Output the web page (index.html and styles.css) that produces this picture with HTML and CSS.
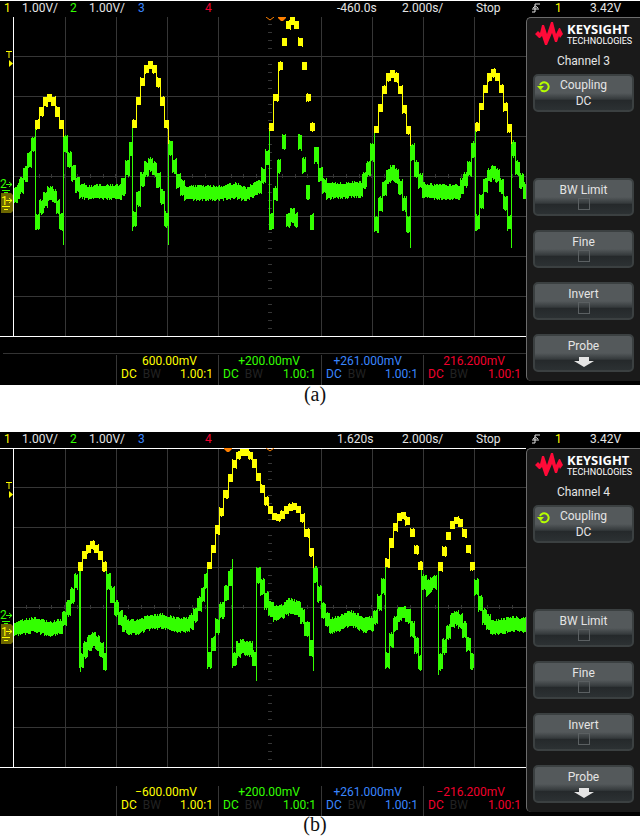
FILE: index.html
```html
<!DOCTYPE html>
<html lang="en">
<head>
<meta charset="utf-8">
<meta name="viewport" content="width=device-width, initial-scale=1">
<title>Oscilloscope captures</title>
<link rel="stylesheet" href="styles.css">
</head>
<body>
<svg class="defs" aria-hidden="true">
  <symbol id="logo" viewBox="0 0 28 24"><path d="M0 12L3 9L5 11L7 3H9L12 12L16 0H18L21 12L24 6H25L28 12L25 16L24 14L22 20H20L17 11L12 23H10L7 14L5 16H4Z"/></symbol>
  <symbol id="edge" viewBox="0 0 8 10"><path d="M0 9H3V1H8M0 6H7M1 5L3.500 3L6 5"/></symbol>
  <symbol id="cycle" viewBox="0 0 14 12"><path class="ring" d="M4 9A4.500 4.500 0 1 0 3 4"/><path class="tip" d="M0 5H7L3.500 9Z"/></symbol>
  <symbol id="down" viewBox="0 0 20 10"><path d="M5 0H15V4H20L10 10L0 4H5Z"/></symbol>
  <symbol id="markers" viewBox="0 0 14 163">
    <path class="yellow-line" d="M6 .5H12M9 1V7"/>
    <path class="yellow-fill" d="M9 9L13 12.500L9 16Z"/>
    <path class="zero" d="M1 142H11L13 144V160L11 162H1Z"/>
    <path class="green-line" d="M6 133.500H12M9 131L12 133.500L9 136M2 139.500H10M4 141.500H8"/>
    <path class="yellow-line" d="M6 149.500H12M9 147L12 149.500L9 152M2 155.500H10M4 158.500H8"/>
  </symbol>
</svg>

<main>
<figure class="capture">
  <div class="scope">
    <header class="status">
      <span class="yellow">1</span><span>1.00V/</span><span class="green">2</span><span>1.00V/</span>
      <span class="blue">3</span><span class="red">4</span><span>-460.0s</span><span>2.000s/</span><span>Stop</span>
      <svg class="edge"><use href="#edge"/></svg><span class="yellow">1</span><span>3.42V</span>
    </header>
    <div class="screen">
      <svg class="plot" data-plot="a" viewBox="0 17 526 320" role="img" aria-label="Channels 1 and 2"></svg>
      <div class="readouts ruled">
        <div class="cell yellow"><b>600.00mV</b><p><span>DC</span><i>BW</i><span>1.00:1</span></p></div>
        <div class="cell green"><b>+200.00mV</b><p><span>DC</span><i>BW</i><span>1.00:1</span></p></div>
        <div class="cell blue"><b>+261.000mV</b><p><span>DC</span><i>BW</i><span>1.00:1</span></p></div>
        <div class="cell red"><b>216.200mV</b><p><span>DC</span><i>BW</i><span>1.00:1</span></p></div>
      </div>
    </div>
    <aside class="menu">
      <div class="brand"><svg><use href="#logo"/></svg><div><strong>KEYSIGHT</strong><small>TECHNOLOGIES</small></div></div>
      <h2>Channel 3</h2>
      <button class="key first" type="button"><svg class="cycle"><use href="#cycle"/></svg><span>Coupling</span><span>DC</span></button>
      <label class="key" for="bw-a"><span>BW Limit</span><input id="bw-a" type="checkbox"></label>
      <label class="key" for="fine-a"><span>Fine</span><input id="fine-a" type="checkbox"></label>
      <label class="key" for="invert-a"><span>Invert</span><input id="invert-a" type="checkbox"></label>
      <button class="key" type="button"><span>Probe</span><svg class="down"><use href="#down"/></svg></button>
    </aside>
  </div>
  <figcaption>(a)</figcaption>
</figure>

<figure class="capture">
  <div class="scope">
    <header class="status">
      <span class="yellow">1</span><span>1.00V/</span><span class="green">2</span><span>1.00V/</span>
      <span class="blue">3</span><span class="red">4</span><span>1.620s</span><span>2.000s/</span><span>Stop</span>
      <svg class="edge"><use href="#edge"/></svg><span class="yellow">1</span><span>3.42V</span>
    </header>
    <div class="screen">
      <svg class="plot" data-plot="b" viewBox="0 448 526 320" role="img" aria-label="Channels 1 and 2"></svg>
      <div class="readouts">
        <div class="cell yellow"><b>−600.00mV</b><p><span>DC</span><i>BW</i><span>1.00:1</span></p></div>
        <div class="cell green"><b>+200.00mV</b><p><span>DC</span><i>BW</i><span>1.00:1</span></p></div>
        <div class="cell blue"><b>+261.000mV</b><p><span>DC</span><i>BW</i><span>1.00:1</span></p></div>
        <div class="cell red"><b>−216.200mV</b><p><span>DC</span><i>BW</i><span>1.00:1</span></p></div>
      </div>
    </div>
    <aside class="menu">
      <div class="brand"><svg><use href="#logo"/></svg><div><strong>KEYSIGHT</strong><small>TECHNOLOGIES</small></div></div>
      <h2>Channel 4</h2>
      <button class="key first" type="button"><svg class="cycle"><use href="#cycle"/></svg><span>Coupling</span><span>DC</span></button>
      <label class="key" for="bw-b"><span>BW Limit</span><input id="bw-b" type="checkbox"></label>
      <label class="key" for="fine-b"><span>Fine</span><input id="fine-b" type="checkbox"></label>
      <label class="key" for="invert-b"><span>Invert</span><input id="invert-b" type="checkbox"></label>
      <button class="key" type="button"><span>Probe</span><svg class="down"><use href="#down"/></svg></button>
    </aside>
  </div>
  <figcaption>(b)</figcaption>
</figure>
</main>
<script src="plots.js"></script>
</body>
</html>
```
FILE: styles.css
```css
* { box-sizing: border-box; }
body { margin: 0; background: #fff; font-family: "Liberation Sans Narrow", Roboto, "Liberation Sans", sans-serif; font-size: 12px; line-height: 13px; color: #e4e4e4; }
main { padding-top: 1px; }
.defs { position: absolute; width: 0; height: 0; }
.capture { margin: 0; }
figcaption { height: 47px; padding-right: 10px; text-align: center; color: #111; font: 20px/18px "Liberation Serif", serif; }
.capture:last-child figcaption { height: 20px; line-height: 16px; }

.scope { display: grid; grid-template-columns: minmax(0, 1fr) 114px; background: #000; }
.status { grid-column: 1 / -1; display: grid; grid-template-columns: 18fr 48fr 19fr 49fr 67fr 132fr 65fr 74fr 56fr 23fr 35fr 50fr; height: 16px; padding-left: 4px; line-height: 14px; white-space: nowrap; }
.edge { width: 8px; height: 10px; margin-top: 2px; fill: none; stroke: #e4e4e4; }
.yellow { color: #ff0; }
.green { color: #3f0; }
.blue { color: #3a86ff; }
.red { color: #f0002c; }

.plot { display: block; width: 100%; height: auto; }
.plot text { font-size: 12px; }
.wave { shape-rendering: crispEdges; }
.yellow-fill, .wave.y { fill: #ff0; }
.green-fill, .wave.g { fill: #3f0; }
.yellow-line { stroke: #ff0; fill: none; }
.green-line { stroke: #3f0; fill: none; }
.zero { fill: #6c6600; }
.cursor { fill: #ff8000; }
.cursor-line { fill: none; stroke: #ff8000; stroke-width: 1; }

.readouts { display: grid; grid-template-columns: 116fr 102fr 103fr 102fr 103fr; height: 48px; padding-top: 18px; position: relative; }
.ruled::before { content: ""; position: absolute; top: 16px; left: 3px; right: 0; border-top: 1px solid #333; }
.cell { border-left: 1px solid #363636; padding: 0 5px 0 4px; }
.cell:first-child { grid-column: 2; }
.cell b { display: block; font-weight: 400; text-align: right; padding-right: 16px; }
.cell p { display: flex; margin: 0; }
.cell i { flex: 1; padding-left: 6px; font-style: normal; color: #222; }

.menu { display: flex; flex-direction: column; margin-bottom: 4px; padding: 4px 6px 8px; border: solid #6c6c6c; border-width: 1px 0 0 1px; border-radius: 5px 0 0 5px; background: #1a1a1a; }
.brand { display: flex; gap: 4px; height: 24px; padding-left: 2px; color: #fff; }
.brand svg { flex: none; width: 28px; height: 24px; fill: #ff0a38; }
.brand strong { display: block; font: 700 13px/14px "Open Sans", sans-serif; }
.brand small { display: block; font: 9px/11px Roboto, sans-serif; }
h2 { margin: 8px 0 6px; font-size: 12px; font-weight: 400; line-height: 14px; text-align: center; }
.key { position: relative; display: flex; flex-direction: column; align-items: center; width: 100%; height: 38px; margin: 0 0 14px; padding: 3px 0 0; border: 2px solid #3b4041; border-radius: 5px; background: linear-gradient(#54595b 0 50%, #353a3c 68%, #25292b 72%, #2c3133); color: #e4e4e4; font: 12px/14px "Liberation Sans Narrow", Roboto, sans-serif; }
.key.first { margin-bottom: 66px; line-height: 16px; padding-top: 1px; }
.key:last-child { margin-bottom: 0; }
.key input { appearance: none; width: 12px; height: 12px; margin: 1px 0 0; border: 1px solid #5b6062; }
.cycle { position: absolute; left: 2px; top: 5px; width: 14px; height: 12px; }
.ring { fill: none; stroke: #b6ff00; stroke-width: 2; }
.tip { fill: #b6ff00; }
.down { width: 20px; height: 10px; margin-top: 4px; fill: #e4e4e4; }
```
FILE: plots.js
```js
// Sampled columns: "x top bottom"; "|" ends a run.
// Wide gaps between samples are filled by interpolation.
const plots = {
  a: {
    top: 17, mark: 51,
    y: `35 120 129,39 107 116,43 97 106,47 94 102,51 97 106,55 107 117,59 120 129|
132 120 128,136 97 105,140 78 86,144 65 73,148 61 69,152 65 73,156 78 87,160 97 106,164 120 128|
269 123 131,273 94 101,278 62 70|282 38 46|286 21 29,290 17 25,294 21 29|298 38 46|302 62 70|306 94 101|310 123 131|
374 126 133,378 104 112,382 86 94,386 73 81,390 70 78,394 73 82,398 86 94,402 105 113,406 126 134|
475 123 131,479 103 110,483 85 93,487 73 81,491 69 77,495 73 81,499 85 93,503 103 111,507 124 132`,
    g: `13 189 201,17 185 199,19 179 192,23 168 180,27 153 167,31 138 150|35 215 229,39 201 213,43 193 206,47 188 200,52 191 202,56 201 212,59 215 229|
63 137 151,67 153 167,71 167 180,75 178 191,79 185 197,84 187 198,100 186 198,117 186 198,121 180 194,125 162 175,129 142 155|
132 213 226,136 192 205,140 174 186,144 163 175,148 159 170,152 163 175,156 174 186,160 191 203,164 213 226|
168 142 155,172 160 172,176 174 187,180 181 195,184 187 199,200 187 199,220 187 199,235 184 197,246 189 200,257 181 193,261 169 182,265 151 163|
269 215 228,273 188 199,277 160 172|282 135 149|286 214 226,290 210 222,294 214 226|298 135 149|302 159 172|306 186 199|310 215 229|
314 148 162,318 169 181,322 180 192,326 185 198,335 184 197,360 183 196,362 174 187,366 163 175,370 144 160|
374 217 231,378 198 210,382 182 194,386 170 182,390 167 179,394 170 182,398 181 193,402 198 210,406 217 231|
410 145 159,414 162 176,418 175 187,422 184 197,435 186 198,455 186 198,460 180 193,463 174 186,467 162 175,471 143 157|
475 216 229,479 196 207,483 180 192,487 170 181,491 166 178,495 170 181,499 180 192,503 197 209,507 216 229|
511 142 156,515 162 174,519 175 187,523 184 197`,
    lines: { y: [[168, 128, 144], [410, 133, 146], [511, 131, 144], [63, 129, 137]],
             g: [[35, 128, 229], [63, 137, 245], [132, 126, 231], [168, 144, 245], [269, 131, 230], [374, 131, 232], [410, 146, 248], [475, 130, 231], [511, 144, 248]] },
    hollow: 270, solid: 282
  },
  b: {
    top: 448, mark: 482,
    y: `78 562 571,82 551 559,86 545 553,90 541 549,94 545 553,98 551 560,102 562 571|
207 562 569,211 545 553,215 525 534,219 508 516,223 490 498,228 474 482,232 460 468,236 452 459,240 449 456,244 449 456,248 452 459,252 459 468,256 473 481,260 485 493,264 497 505,268 506 514,272 513 520,276 514 521,280 511 519,284 506 514,288 504 511,292 503 510,296 506 513,300 514 522,304 529 537,309 548 556|
385 559 567,389 538 548,393 523 531,397 513 521,401 512 519,405 517 525|410 529 537|414 546 554|418 562 570|
438 562 571|442 547 556|446 532 540|450 521 529,454 517 524,458 519 527|462 529 537|466 545 553|470 562 570`,
    g: `13 623 635,33 619 631,50 623 635,58 621 633,62 613 625,66 602 615,70 589 602,74 575 588|
80 654 667,83 643 657,87 637 649,91 634 646,95 637 649,99 644 656,103 655 669|
106 575 588,110 588 602,114 602 615,118 612 625,122 617 630,126 621 633,138 621 633,147 617 629,162 615 627,175 619 631,186 619 631,189 615 628,193 609 621,197 598 611,201 588 601,204 575 588|
207 653 667,211 638 651,215 620 633,219 604 617,224 587 600,228 571 585|
232 653 665,236 643 656,240 639 652,248 643 655,252 652 665|
256 569 582,260 580 594,264 593 608,268 602 615,273 608 620,281 606 617,284 602 614,288 599 611,296 602 615,300 610 622,304 622 636,309 641 656|
313 568 582,317 587 601,321 604 617,325 613 626,329 619 632,337 618 631,350 612 624,364 618 631,371 618 630,373 611 623,377 596 609,381 580 593|
385 653 667,389 634 646,393 618 630,397 609 620,401 607 618,405 611 622,410 623 636,414 638 652,418 656 669|
421 576 588,426 583 595,433 576 588|
438 655 669,442 640 653,446 626 638,450 615 627,454 612 624,458 615 627,462 623 636,466 638 650,470 655 668|
474 580 594,478 597 610,482 610 623,486 616 628,490 621 633,498 621 633,512 618 630,525 619 631`,
    lines: { y: [[313, 550, 568], [389, 546, 568], [106, 565, 568]],
             g: [[79, 564, 668], [80, 564, 672], [106, 565, 670], [207, 565, 665], [232, 559, 668], [256, 569, 681], [313, 568, 671], [385, 565, 665], [421, 564, 669], [438, 565, 675]] },
    hollow: 270, solid: 228
  }
};

let seed = 7;
const noise = n => {
  seed = (seed * 1103515245 + 12345) % 2147483648;
  return Math.floor(seed / 2147483648 * n);
};
const bar = (x, top, bottom, width = 1) => `M${x} ${top}h${width}V${bottom}h-${width}Z`;

function wave(text, lines, noisy) {
  let d = lines.map(([x, top, bottom]) => bar(x, top, bottom)).join("");
  for (const run of text.split("|")) {
    const points = run.trim().split(",").map(p => p.split(" ").map(Number));
    points.forEach(([x, top, bottom], i) => {
      const next = points[i + 1];
      const span = next ? next[0] - x : 4;
      const wide = span > 6;
      for (let k = 0; k < (wide || !next && noisy ? span : span + 1); k++) {
        const t = wide ? k / span : 0;
        const a = Math.round(top + (t ? (next[1] - top) * t : 0));
        const b = Math.round(bottom + (t ? (next[2] - bottom) * t : 0));
        d += noisy ? bar(x + k, a - noise(3), b + noise(3)) : bar(x + k, a - (noise(8) === 0), b + (noise(8) === 0));
      }
      if (next && (next[1] > bottom || next[2] < top)) {
        d += bar(next[0], Math.min(top, next[1]), Math.max(bottom, next[2]));
      }
    });
  }
  return d;
}

for (const svg of document.querySelectorAll(".plot")) {
  const p = plots[svg.dataset.plot];
  const first = p.top === 17 ? 56 : 487;
  const bottom = p.top + 319;
  let grid = "";
  for (let i = 1; i < 10; i++) if (i !== 5) grid += bar(14 + Math.floor(i * 51.2), p.top, bottom);
  for (let i = 0; i < 7; i++) grid += bar(14, first + i * 40, first + i * 40 + 1, 512);
  for (let y = p.top + 7; y < bottom; y += 8) grid += bar(268, y, y + 1, 4);
  for (let i = 1; i < 40; i++) grid += bar(13 + Math.round(i * 12.8), first + 118, first + 122);
  const frame = bar(13, p.top, bottom) + bar(0, bottom, bottom + 1, 526) + (p.top === 448 ? bar(0, 448, 449, 526) : "");
  svg.innerHTML = `
    <path d="${grid}" fill="#363636" shape-rendering="crispEdges"/>
    <path class="wave g" d="${wave(p.g, p.lines.g, true)}"/>
    <path class="wave y" d="${wave(p.y, p.lines.y, false)}"/>
    <path d="${frame}" fill="#fff" shape-rendering="crispEdges"/>
    <path class="cursor-line" d="M${p.hollow - 4} ${p.top}l4 3l4 -3"/>
    <path class="cursor" d="M${p.solid - 4} ${p.top}h8v1l-3 3h-2l-3 -3z"/>
    <use href="#markers" x="0" y="${p.mark}" width="14" height="163"/>
    <text class="green-fill" x="0" y="${p.mark + 137}">2</text>
    <text class="yellow-fill" x="1" y="${p.mark + 154}">1</text>`;
}
```
